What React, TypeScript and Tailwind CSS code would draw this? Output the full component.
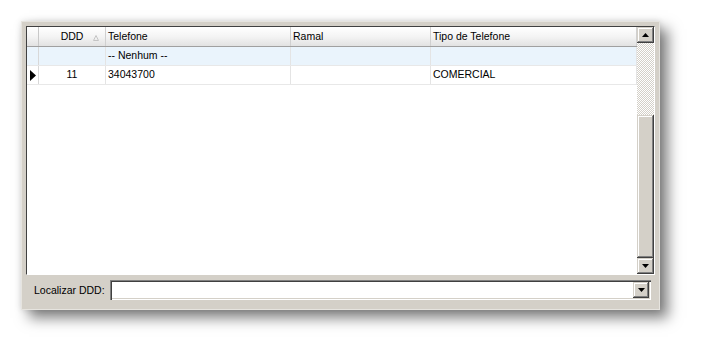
const raised =
  'bg-[#d4d0c8] shadow-[inset_-1px_-1px_#404040,inset_1px_1px_#d4d0c8,inset_-2px_-2px_#808080,inset_2px_2px_#ffffff]'

function Arrow({ up }: { up?: boolean }) {
  return (
    <svg width="7" height="4" viewBox="0 0 7 4" className="block">
      {up ? <path d="M3.5 0 L7 4 L0 4 Z" fill="#000" /> : <path d="M0 0 L7 0 L3.5 4 Z" fill="#000" />}
    </svg>
  )
}

function ScrollBtn({ up }: { up?: boolean }) {
  return (
    <div className={`${raised} h-[16px] w-full flex items-center justify-center shrink-0`}>
      <Arrow up={up} />
    </div>
  )
}

const COLS = [
  { key: 'ddd', label: 'DDD', w: 'w-[67px]', align: 'center' },
  { key: 'tel', label: 'Telefone', w: 'w-[185px]', align: 'left' },
  { key: 'ramal', label: 'Ramal', w: 'w-[140px]', align: 'left' },
  { key: 'tipo', label: 'Tipo de Telefone', w: 'flex-1', align: 'left' },
]

const ROWS = [
  { ddd: '', tel: '-- Nenhum --', ramal: '', tipo: '', blank: true },
  { ddd: '11', tel: '34043700', ramal: '', tipo: 'COMERCIAL', current: true },
]

export default function App() {
  return (
    <div className="w-[702px] h-[352px] bg-white pl-[21px] pt-[21px] font-['Liberation_Sans',Arial,sans-serif] text-[10.5px] text-black overflow-hidden">
      <div className="w-[639px] h-[289px] bg-[#d4d0c8] border border-[#e6e4df] shadow-[8px_8px_13px_rgba(0,0,0,0.5),0_0_6px_rgba(0,0,0,0.12)] p-[4px] flex flex-col">
        {/* grid */}
        <div className="h-[249px] border-t border-l border-[#404040] border-r-white border-b-white border-r border-b flex bg-white">
          <div className="flex-1 flex flex-col">
            {/* header */}
            <div className="h-[20px] flex border-b border-[#a0a0a0] bg-[linear-gradient(#ffffff,#f4f4f4_50%,#e2e2e2)]">
              <div className="w-[12px] border-r border-[#c8c8c8]" />
              {COLS.map(c => (
                <div
                  key={c.key}
                  className={`${c.w} flex items-center border-r border-[#d0d0d0] ${c.align === 'center' ? 'justify-center relative' : 'pl-[2px]'}`}
                >
                  <span>{c.label}</span>
                  {c.key === 'ddd' && (
                    <svg width="6" height="6" viewBox="0 0 6 6" className="absolute right-[6px] top-[8px]">
                      <path d="M3 0.5 L5.5 5.5 L0.5 5.5 Z" fill="none" stroke="#c4c4c4" strokeWidth="1" />
                    </svg>
                  )}
                </div>
              ))}
            </div>
            {ROWS.map((r, i) => (
              <div key={i} className={`h-[19px] flex border-b border-[#e8e8e8] ${r.blank ? 'bg-[#eaf4fc]' : 'bg-white'}`}>
                <div className="w-[12px] border-r border-[#d8d8d8] flex items-center pl-[3px]">
                  {r.current && (
                    <svg width="6" height="11" viewBox="0 0 6 11">
                      <path d="M0 0 L6 5.5 L0 11 Z" fill="#000" />
                    </svg>
                  )}
                </div>
                <div className="w-[67px] border-r border-[#e4e4e4] flex items-center justify-center">{r.ddd}</div>
                <div className="w-[185px] border-r border-[#e4e4e4] flex items-center pl-[2px]">{r.tel}</div>
                <div className="w-[140px] border-r border-[#e4e4e4] flex items-center pl-[2px]">{r.ramal}</div>
                <div className="flex-1 border-r border-[#e4e4e4] flex items-center pl-[2px]">{r.tipo}</div>
              </div>
            ))}
          </div>
          {/* scrollbar */}
          <div className="w-[17px] flex flex-col bg-[repeating-conic-gradient(#d4d0c8_0_25%,#ffffff_0_50%)] bg-[length:2px_2px]">
            <ScrollBtn up />
            <div className="flex-1 flex flex-col justify-end">
              <div className={`${raised} h-[143px]`} />
            </div>
            <ScrollBtn />
          </div>
        </div>
        {/* locate bar */}
        <div className="flex-1 flex items-center pl-[8px] pr-[4px] gap-[5px]">
          <span className="leading-none">Localizar DDD:</span>
          <div className="flex-1 h-[20px] bg-white flex items-center justify-end pr-[2px] shadow-[inset_1px_1px_#808080,inset_2px_2px_#404040,inset_-1px_-1px_#ffffff,inset_-2px_-2px_#d4d0c8]">
            <div className={`${raised} w-[16px] h-[16px] flex items-center justify-center`}>
              <Arrow />
            </div>
          </div>
        </div>
      </div>
    </div>
  )
}
